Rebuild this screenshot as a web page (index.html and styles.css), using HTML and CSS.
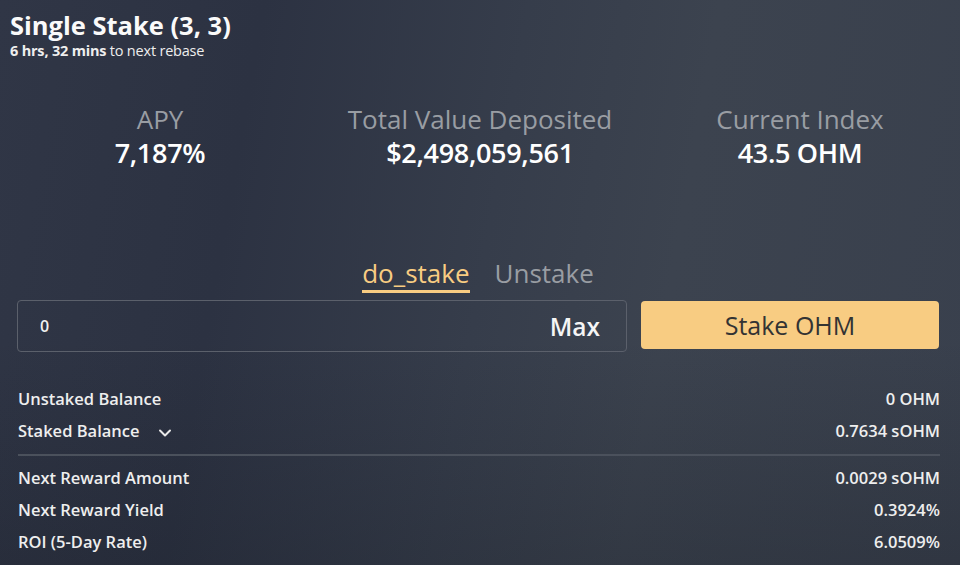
FILE: index.html
```html
<!DOCTYPE html>
<html>
<head>
<meta charset="utf-8">
<link rel="stylesheet" href="styles.css">
</head>
<body>
<div class="page">
  <header class="head">
    <h1 class="title">Single Stake (3, 3)</h1>
    <p class="rebase"><b>6 hrs, 32 mins</b> to next rebase</p>
  </header>

  <section class="metrics">
    <div class="metric">
      <div class="m-label">APY</div>
      <div class="m-value">7,187%</div>
    </div>
    <div class="metric">
      <div class="m-label">Total Value Deposited</div>
      <div class="m-value">$2,498,059,561</div>
    </div>
    <div class="metric">
      <div class="m-label">Current Index</div>
      <div class="m-value">43.5 OHM</div>
    </div>
  </section>

  <nav class="tabs">
    <span class="tab active">do_stake</span>
    <span class="tab">Unstake</span>
  </nav>

  <div class="action">
    <div class="field">
      <span class="field-value">0</span>
      <span class="max">Max</span>
    </div>
    <button class="stake-btn">Stake OHM</button>
  </div>

  <div class="data">
    <div class="row"><span>Unstaked Balance</span><span>0 OHM</span></div>
    <div class="row"><span class="with-icon">Staked Balance
      <svg class="chev" width="14" height="10" viewBox="0 0 14 10"><path d="M2 2.5 L7 7.5 L12 2.5" fill="none" stroke="#e8e8e8" stroke-width="2" stroke-linecap="round" stroke-linejoin="round"/></svg></span><span>0.7634 sOHM</span></div>
    <div class="divider"></div>
    <div class="row"><span>Next Reward Amount</span><span>0.0029 sOHM</span></div>
    <div class="row"><span>Next Reward Yield</span><span>0.3924%</span></div>
    <div class="row"><span>ROI (5-Day Rate)</span><span>6.0509%</span></div>
  </div>
</div>
</body>
</html>
```

FILE: styles.css
```css
* { box-sizing: border-box; }
html, body { margin: 0; padding: 0; height: 100%; }
body {
  font-family: "Open Sans", "Lato", sans-serif;
  color: #f5f5f5;
  background:
    linear-gradient(180deg, rgba(0,0,0,0) 60%, rgba(20,24,32,0.25) 100%),
    linear-gradient(100deg, #303646 0%, #2c3242 25%, #363d4b 50%, #3c434f 68%, #39404d 100%);
  overflow: hidden;
}
.page { width: 960px; height: 565px; padding: 10px 20px 0 10px; }

.title { margin: 0; font-size: 25.5px; font-weight: 700; line-height: 30px; color: #fafafa; }
.rebase { margin: 3px 0 0; font-size: 14.5px; line-height: 15px; color: #eee; letter-spacing: -0.2px; }
.rebase b { font-weight: 700; }

.metrics { display: grid; grid-template-columns: repeat(3, 1fr); margin: 46px -20px 0 -10px; }
.metric { text-align: center; }
.m-label { font-size: 26px; line-height: 30px; color: #999da3; font-weight: 400; }
.m-value { font-size: 27px; line-height: 32px; color: #fff; font-weight: 600; margin-top: 3px; letter-spacing: -0.3px; }

.tabs { display: flex; justify-content: center; gap: 25px; margin-top: 89px; padding-left: 6px; }
.tab { font-size: 26px; line-height: 30px; color: #999da3; padding-bottom: 2px; }
.tab.active { color: #f8cc82; border-bottom: 3px solid #f8cc82; }

.action { display: flex; gap: 14px; margin-top: 7px; padding-left: 7px; }
.field {
  width: 610px; height: 52px;
  border: 1px solid #5b606b; border-radius: 4px;
  display: flex; align-items: center; justify-content: space-between;
  padding: 0 26px 0 22px;
}
.field-value { font-size: 16px; color: #f0f0f0; font-weight: 600; }
.max { font-size: 24.5px; font-weight: 600; color: #f5f5f5; }
.stake-btn {
  width: 298px; height: 48px; margin-top: 1px;
  border: 0; border-radius: 4px; background: #f8cc82;
  font-family: inherit; font-size: 25px; color: #333;
}

.data { padding-left: 8px; margin-top: 31px; }
.row { display: flex; justify-content: space-between; font-size: 16.5px; font-weight: 600; line-height: 32px; color: #eeeeee; }
.with-icon { display: flex; align-items: center; gap: 18px; }
.chev { margin-top: 3px; }
.divider { height: 2px; background: #4b515c; margin: 7px 0 6px; }
```
